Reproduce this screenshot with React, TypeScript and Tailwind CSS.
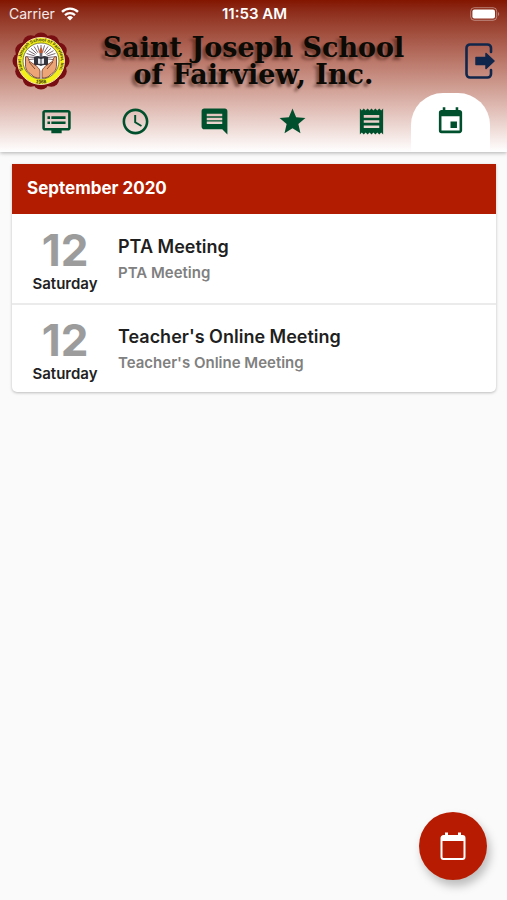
import React, { useState } from "react";
import clsx from "clsx";
import { IconType } from "react-icons";
import {
  MdAccessTime,
  MdComment,
  MdDvr,
  MdEvent,
  MdReceipt,
  MdStar,
} from "react-icons/md";

type SchoolEvent = {
  id: number;
  day: string;
  weekday: string;
  title: string;
  description: string;
};

type Tab = {
  name: string;
  icon: IconType;
};

const tabs: Tab[] = [
  { name: "Feed", icon: MdDvr },
  { name: "Schedule", icon: MdAccessTime },
  { name: "Messages", icon: MdComment },
  { name: "Grades", icon: MdStar },
  { name: "Billing", icon: MdReceipt },
  { name: "Events", icon: MdEvent },
];

const events: SchoolEvent[] = [
  {
    id: 1,
    day: "12",
    weekday: "Saturday",
    title: "PTA Meeting",
    description: "PTA Meeting",
  },
  {
    id: 2,
    day: "12",
    weekday: "Saturday",
    title: "Teacher's Online Meeting",
    description: "Teacher's Online Meeting",
  },
];

const StatusBar = () => {
  return (
    <div className="grid h-7 grid-cols-3 items-center pl-[9px] pr-[7px] text-sm text-white">
      <div className="flex items-center gap-[6px] text-white/90">
        Carrier
        <svg width="18" height="14" viewBox="0 0 18 14" fill="none">
          <path d="M1 4.8a11.6 11.6 0 0 1 16 0" stroke="#fff" strokeWidth="2.4" />
          <path d="M4 8.1a7.2 7.2 0 0 1 10 0" stroke="#fff" strokeWidth="2.2" />
          <path d="M9 13.6 6 10.5a4.3 4.3 0 0 1 6 0z" fill="#fff" />
        </svg>
      </div>
      <div className="text-center text-[15px] font-semibold">11:53 AM</div>
      <svg
        className="justify-self-end"
        width="30"
        height="14"
        viewBox="0 0 30 14"
        fill="none"
      >
        <rect x="0.7" y="0.7" width="26" height="12.6" rx="3.6" stroke="#fff" strokeOpacity="0.4" />
        <rect x="2.4" y="2.4" width="22.6" height="9.2" rx="2" fill="#fff" />
        <path d="M28 5c1.6.6 1.6 3.4 0 4z" fill="#fff" fillOpacity="0.4" />
      </svg>
    </div>
  );
};

const SchoolSeal = () => {
  const scallops = Array.from({ length: 12 }, (_, i) => (i * 2 * Math.PI) / 12);
  const rays = Array.from({ length: 15 }, (_, i) => Math.PI + (i * Math.PI) / 14);
  return (
    <svg width="58" height="58" viewBox="0 0 58 58" className="shrink-0">
      <circle cx="29" cy="29" r="26" fill="#780d12" />
      {scallops.map((a) => (
        <circle
          key={a}
          cx={29 + 20.5 * Math.sin(a)}
          cy={29 - 20.5 * Math.cos(a)}
          r="8"
          fill="#780d12"
        />
      ))}
      <circle cx="29" cy="29" r="23.5" fill="#f4f01c" stroke="#f3ddb0" strokeWidth="1" />
      <circle cx="29" cy="29" r="18" fill="#fff" stroke="#4b4a20" strokeWidth="0.7" />
      <defs>
        <path id="seal-top" d="M12.5 40.5A20 20 0 1 1 45.5 40.5" />
        <path id="seal-bottom" d="M19 49.2A22.4 22.4 0 0 0 39 49.2" />
      </defs>
      <g fontFamily="Liberation Sans" fontWeight="700" fill="#3d3b10">
        <text fontSize="4.6">
          <textPath href="#seal-top" startOffset="50%" textAnchor="middle">
            Saint Joseph School of Fairview, Inc.
          </textPath>
        </text>
        <text fontSize="5">
          <textPath href="#seal-bottom" startOffset="50%" textAnchor="middle">
            1968
          </textPath>
        </text>
      </g>
      {rays.map((a) => (
        <path
          key={a}
          d={`M${29 + 7 * Math.cos(a)} ${27 + 7 * Math.sin(a)}L${29 + 16 * Math.cos(a)} ${28 + 15 * Math.sin(a)}`}
          stroke="#6a5560"
          strokeWidth="0.9"
        />
      ))}
      <path d="M22 25q3.5-2 7 0 3.5-2 7 0v9q-3.5-2-7 0-3.5-2-7 0z" fill="#33343c" />
      <path d="M26 26.5q1.7-.4 2.5.6v5q-1-.7-2.5-.3zM32 26.5q-1.7-.4-2.5.6v5q1-.7 2.5-.3z" fill="#e8e8ee" />
      <path d="M29 15q2.5 3.5 1.5 6.5h-3Q26.500 18.500 29 15z" fill="#c1592f" />
      <path d="M27.7 21h2.6v4h-2.6z" fill="#6b6570" />
      <path
        d="M13.5 25c2-1 3.5 1 3.5 4l6 4c2 1.5 4.5 3.5 5 6v7c-4 0-7-1-8-3-5-3-6.5-6-6.5-10z"
        fill="#eba577"
        stroke="#6b3422"
        strokeWidth="0.8"
      />
      <path
        d="M44.5 25c-2-1-3.5 1-3.5 4l-6 4c-2 1.5-4.5 3.5-5 6v7c4 0 7-1 8-3 5-3 6.5-6 6.5-10z"
        fill="#eba577"
        stroke="#6b3422"
        strokeWidth="0.8"
      />
      <path d="M17 30l6 7M41 30l-6 7" stroke="#6b3422" strokeWidth="0.8" />
    </svg>
  );
};

const LogoutIcon = () => {
  return (
    <svg width="30" height="36" viewBox="0 0 30 36" fill="none">
      <path
        d="M26 9V5a3.5 3.5 0 0 0-3.5-3.5H5A3.5 3.5 0 0 0 1.5 5v26A3.5 3.5 0 0 0 5 34.5h17.5A3.5 3.5 0 0 0 26 31v-4"
        stroke="#10264b"
        strokeWidth="2.6"
        strokeLinecap="round"
      />
      <path
        d="M11 14.5h10v-4l8 7.5-8 7.5v-4H11z"
        fill="#10264b"
        stroke="#10264b"
        strokeWidth="1.5"
        strokeLinejoin="round"
      />
    </svg>
  );
};

const Header = () => {
  const [active, setActive] = useState("Events");
  return (
    <header className="relative bg-linear-to-b from-[#821500] to-white shadow-[0_1px_4px_rgba(0,0,0,0.3)]">
      <StatusBar />
      <div className="grid h-[65px] grid-cols-[58px_1fr_58px] items-center px-3">
        <SchoolSeal />
        <h1 className="text-center font-['DejaVu_Serif',serif] text-[27px] leading-[27px] font-bold whitespace-nowrap text-[#0b0a04] [text-shadow:-3px_3px_3px_rgba(40,10,0,0.45)]">
          Saint Joseph School
          <br />
          of Fairview, Inc.
        </h1>
        <button type="button" aria-label="Log out" className="justify-self-end">
          <LogoutIcon />
        </button>
      </div>
      <nav className="grid grid-cols-6 px-[17px]">
        {tabs.map(({ name, icon: Icon }) => (
          <button
            key={name}
            type="button"
            aria-label={name}
            onClick={() => setActive(name)}
            className={clsx(
              "flex h-[59px] items-center justify-center rounded-t-[32px] pb-[2px] text-[#00502d]",
              active === name && "bg-white"
            )}
          >
            <Icon size={31} />
          </button>
        ))}
      </nav>
    </header>
  );
};

const EventRow = ({ event }: { event: SchoolEvent }) => {
  return (
    <li className="flex h-[89px] items-center border-t-2 border-[#ebebeb] first:border-t-0">
      <div className="w-[106px] shrink-0 pt-[6px] text-center">
        <div className="text-[44px] leading-[44px] font-bold text-[#9c9c9c]">
          {event.day}
        </div>
        <div className="text-[15px] leading-6 font-semibold text-[#222]">
          {event.weekday}
        </div>
      </div>
      <div>
        <h3 className="text-lg leading-7 font-semibold text-[#1f1f1f]">
          {event.title}
        </h3>
        <p className="text-[15px] leading-6 font-semibold text-[#808080]">
          {event.description}
        </p>
      </div>
    </li>
  );
};

export default function App() {
  return (
    <div className="min-h-screen bg-[#fafafa] font-['Inter',sans-serif]">
      <Header />
      <main className="pt-3 pr-[11px] pb-24 pl-3">
        <section className="overflow-hidden rounded-b-[5px] bg-white shadow-[0_1px_3px_rgba(0,0,0,0.25)]">
          <h2 className="flex h-[50px] items-center bg-[#b21d02] px-[15px] text-[17px] font-bold text-white">
            September 2020
          </h2>
          <ul>
            {events.map((event) => (
              <EventRow key={event.id} event={event} />
            ))}
          </ul>
        </section>
      </main>
      <button
        type="button"
        aria-label="Open calendar"
        className="fixed right-5 bottom-5 flex size-[68px] items-center justify-center rounded-full bg-[#b71c02] shadow-[3px_6px_10px_rgba(0,0,0,0.25)]"
      >
        <svg width="26" height="28" viewBox="0 0 26 28" fill="none">
          <path
            d="M3.5 4h19a2 2 0 0 1 2 2v19a2 2 0 0 1-2 2h-19a2 2 0 0 1-2-2V6a2 2 0 0 1 2-2z"
            stroke="#fff"
            strokeWidth="2"
          />
          <path d="M1.5 4h23v5h-23zM5 .5h3V5H5zM18 .5h3V5h-3z" fill="#fff" />
        </svg>
      </button>
    </div>
  );
}
